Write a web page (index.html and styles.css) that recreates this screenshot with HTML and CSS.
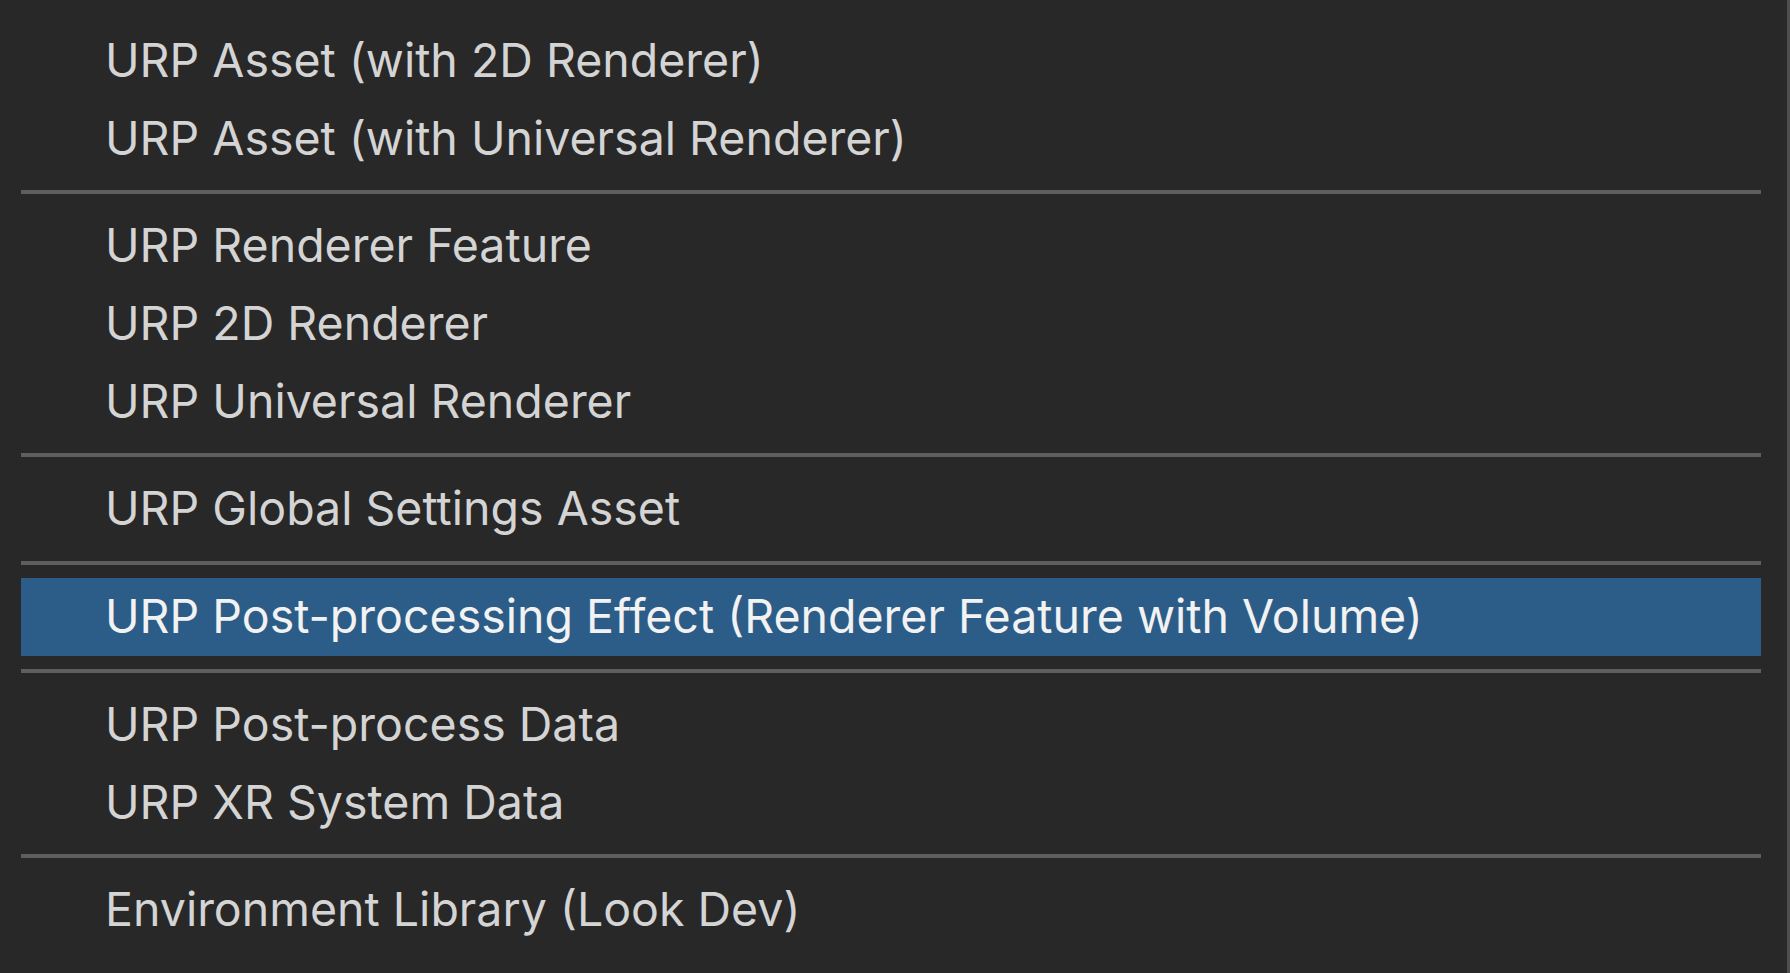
FILE: index.html
```html
<!DOCTYPE html>
<html lang="en">
<head>
    <meta charset="utf-8">
    <title>Create menu</title>
    <link rel="stylesheet" href="styles.css">
</head>
<body>

    <div class="menu">
        <div class="menu-item">URP Asset (with 2D Renderer)</div>
        <div class="menu-item">URP Asset (with Universal Renderer)</div>
        <div class="separator"></div>
        <div class="menu-item">URP Renderer Feature</div>
        <div class="menu-item">URP 2D Renderer</div>
        <div class="menu-item">URP Universal Renderer</div>
        <div class="separator"></div>
        <div class="menu-item">URP Global Settings Asset</div>
        <div class="separator"></div>
        <div class="menu-item selected">URP Post-processing Effect (Renderer Feature with Volume)</div>
        <div class="separator"></div>
        <div class="menu-item">URP Post-process Data</div>
        <div class="menu-item">URP XR System Data</div>
        <div class="separator"></div>
        <div class="menu-item">Environment Library (Look Dev)</div>
    </div>

</body>
</html>
```

FILE: styles.css
```css
/* base */
html, body {
    margin: 0;
    padding: 0;
    height: 100%;
}

body {
    background: #282828;
    font-family: "Inter", "Liberation Sans", sans-serif;
    overflow: hidden;
}

/* menu panel */
.menu {
    box-sizing: border-box;
    height: 100%;
    padding: 22px 26px 0 21px;
    border-right: 3px solid #4e4e4e;
}

.menu-item {
    height: 77.7px;
    line-height: 77.7px;
    padding-left: 84px;
    font-size: 46.5px;
    color: #d4d4d4;
    white-space: nowrap;
}

.menu-item.selected {
    background: #2c5d88;
    color: #f2f2f2;
}

/* separator lines */
.separator {
    height: 4px;
    margin: 13px 0;
    background: #5e5e5e;
}
```
